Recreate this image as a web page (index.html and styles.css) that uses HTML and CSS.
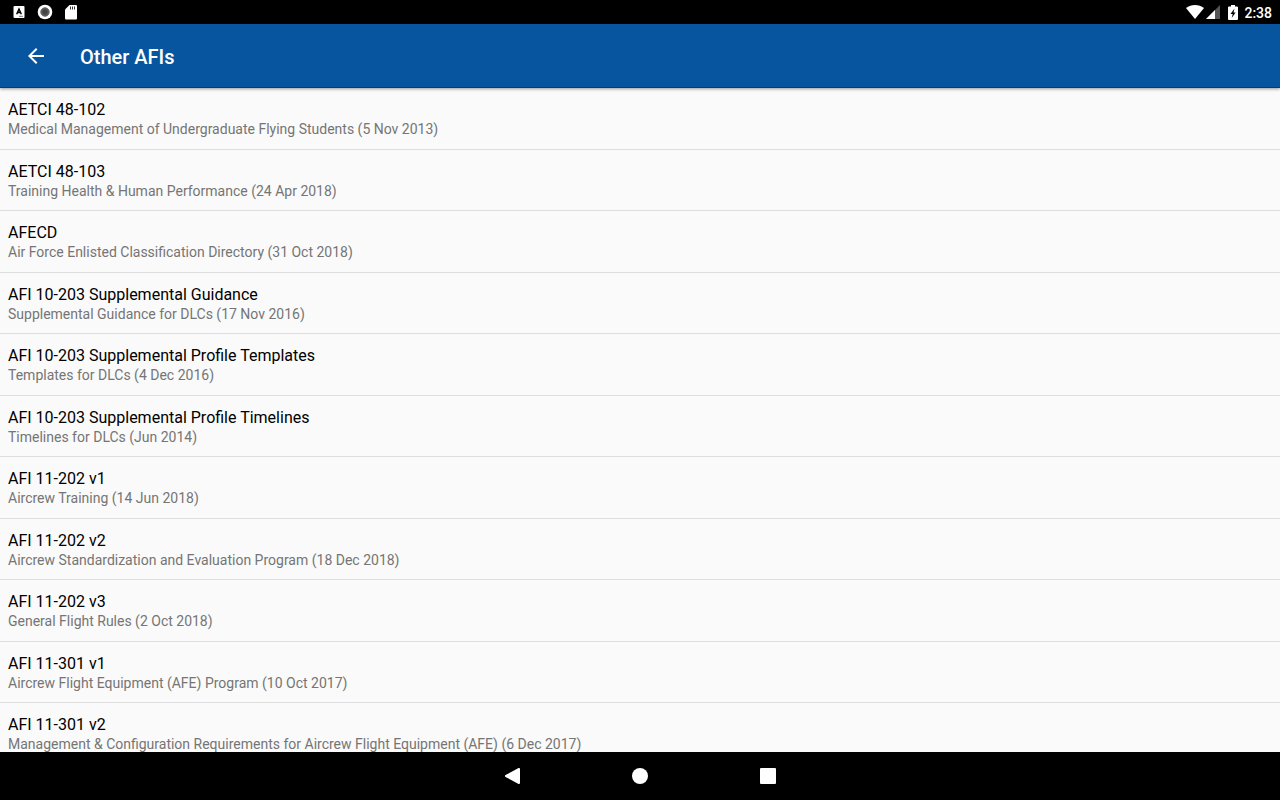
FILE: index.html
```html
<!DOCTYPE html>
<html lang="en">
<head>
  <meta charset="UTF-8" />
  <meta name="viewport" content="width=device-width, initial-scale=1.0"/>
  <title>Other AFIs</title>
  <link rel="stylesheet" href="styles.css">
</head>
<body>
  <div class="status-bar">
    <div class="status-icons">
      <svg width="12" height="12" viewBox="0 0 12 12">
        <rect x="0.5" width="11" height="12" rx="1" fill="#fff"/>
        <path d="M3.7 8.2L6 3l2.300 5.200M4.600 6.600h2.800" fill="none" stroke="#000" stroke-width="1.500"/>
        <path d="M6 10.300h4" stroke="#555" stroke-width="0.800"/>
      </svg>
      <svg width="16" height="16" viewBox="0 0 16 16">
        <circle cx="8" cy="8" r="7.300" fill="#fff"/>
        <circle cx="8" cy="8" r="4.200" fill="#555" stroke="#666" stroke-width="1"/>
        <circle cx="8" cy="8" r="2.400" fill="#444"/>
      </svg>
      <svg width="12" height="16" viewBox="0 0 12 16">
        <path d="M4.500 1H11a1 1 0 0 1 1 1v12.500a1 1 0 0 1-1 1H1a1 1 0 0 1-1-1V5.500z" fill="#fff"/>
        <path d="M5.500 2.500v3M7.500 2.500v3M9.500 2.500v3" stroke="#333" stroke-width="1"/>
      </svg>
    </div>
    <div class="status-system">
      <svg width="18" height="14" viewBox="0 0 18 14">
        <path d="M9 14L0 3C5-1 13-1 18 3z" fill="#fff"/>
      </svg>
      <svg width="14" height="14" viewBox="0 0 14 14">
        <path d="M14 0v14H0z" fill="#555"/>
        <path d="M9 5v9H0z" fill="#fff"/>
      </svg>
      <svg class="battery" width="10" height="15" viewBox="0 0 10 15">
        <path d="M3 0h4v1.500h2a1 1 0 0 1 1 1V14a1 1 0 0 1-1 1H1a1 1 0 0 1-1-1V2.500a1 1 0 0 1 1-1h2z" fill="#fff"/>
        <path d="M6.500 3.500L2.500 9h2.200l-1 4L7.600 7.500H5.500z" fill="#000"/>
      </svg>
      <span class="clock">2:38</span>
    </div>
  </div>

  <header class="app-bar">
    <button class="back" aria-label="Back">
      <svg width="24" height="24" viewBox="0 0 24 24">
        <path d="M20 11H7.830l5.590-5.590L12 4l-8 8 8 8 1.410-1.410L7.830 13H20z" fill="#fff"/>
      </svg>
    </button>
    <h1>Other AFIs</h1>
  </header>

  <main class="content">
    <ul class="list">
      <li><a href="#"><span class="name">AETCI 48-102</span><span class="detail">Medical Management of Undergraduate Flying Students (5 Nov 2013)</span></a></li>
      <li><a href="#"><span class="name">AETCI 48-103</span><span class="detail">Training Health &amp; Human Performance (24 Apr 2018)</span></a></li>
      <li><a href="#"><span class="name">AFECD</span><span class="detail">Air Force Enlisted Classification Directory (31 Oct 2018)</span></a></li>
      <li><a href="#"><span class="name">AFI 10-203 Supplemental Guidance</span><span class="detail">Supplemental Guidance for DLCs (17 Nov 2016)</span></a></li>
      <li><a href="#"><span class="name">AFI 10-203 Supplemental Profile Templates</span><span class="detail">Templates for DLCs (4 Dec 2016)</span></a></li>
      <li><a href="#"><span class="name">AFI 10-203 Supplemental Profile Timelines</span><span class="detail">Timelines for DLCs (Jun 2014)</span></a></li>
      <li><a href="#"><span class="name">AFI 11-202 v1</span><span class="detail">Aircrew Training (14 Jun 2018)</span></a></li>
      <li><a href="#"><span class="name">AFI 11-202 v2</span><span class="detail">Aircrew Standardization and Evaluation Program (18 Dec 2018)</span></a></li>
      <li><a href="#"><span class="name">AFI 11-202 v3</span><span class="detail">General Flight Rules (2 Oct 2018)</span></a></li>
      <li><a href="#"><span class="name">AFI 11-301 v1</span><span class="detail">Aircrew Flight Equipment (AFE) Program (10 Oct 2017)</span></a></li>
      <li><a href="#"><span class="name">AFI 11-301 v2</span><span class="detail">Management &amp; Configuration Requirements for Aircrew Flight Equipment (AFE) (6 Dec 2017)</span></a></li>
    </ul>
  </main>

  <nav class="nav-bar">
    <button aria-label="Back">
      <svg width="16" height="16" viewBox="0 0 16 16">
        <path d="M15 1v14L2 8z" fill="#fff" stroke="#fff" stroke-width="2" stroke-linejoin="round"/>
      </svg>
    </button>
    <button aria-label="Home">
      <svg width="16" height="16" viewBox="0 0 16 16">
        <circle cx="8" cy="8" r="8" fill="#fff"/>
      </svg>
    </button>
    <button aria-label="Recent apps">
      <svg width="16" height="16" viewBox="0 0 16 16">
        <rect width="16" height="16" rx="1" fill="#fff"/>
      </svg>
    </button>
  </nav>
</body>
</html>
```

FILE: styles.css
```css
* {
  box-sizing: border-box;
}

body {
  margin: 0;
  height: 100vh;
  display: flex;
  flex-direction: column;
  background-color: #fafafa;
  font-family: Roboto, sans-serif;
}

svg {
  display: block;
}

button {
  display: flex;
  align-items: center;
  justify-content: center;
  padding: 0;
  border: none;
  background: none;
  cursor: pointer;
}

/* status bar */
.status-bar {
  flex: none;
  display: flex;
  align-items: center;
  justify-content: space-between;
  height: 24px;
  padding: 0 8px 0 13px;
  background-color: #000;
  color: #fff;
}

.status-icons {
  display: flex;
  align-items: center;
  gap: 12px;
}

.status-system {
  display: flex;
  align-items: center;
  gap: 2px;
}

.battery {
  margin: 0 4px 0 6px;
}

.clock {
  font-size: 14px;
  font-weight: 500;
  line-height: 24px;
  padding-top: 1px;
}

/* app bar */
.app-bar {
  flex: none;
  display: flex;
  align-items: center;
  gap: 20px;
  height: 64px;
  padding: 0 12px;
  background-color: #08559f;
  border-bottom: 1px solid #003c8a;
  box-shadow: 0 1px 3px rgba(0,0,0,0.4);
  z-index: 1;
}

.back {
  width: 48px;
  height: 48px;
}

.app-bar h1 {
  margin: 0;
  padding-top: 2px;
  color: #fff;
  font-size: 20px;
  font-weight: 500;
  line-height: 24px;
}

/* list */
.content {
  flex: 1;
  min-height: 0;
  overflow: hidden;
}

.list {
  margin: 0;
  padding: 0;
  list-style: none;
}

.list li {
  border-bottom: 1px solid #dedede;
}

.list a {
  display: block;
  padding: 13px 8px 10px;
  text-decoration: none;
}

.list li:nth-child(even) a {
  padding-bottom: 9px;
}

.name,
.detail {
  display: block;
}

.name {
  color: #000;
  font-size: 16px;
  line-height: 18px;
}

.detail {
  color: #757575;
  font-size: 14px;
  line-height: 20px;
}

/* navigation bar */
.nav-bar {
  flex: none;
  display: flex;
  justify-content: center;
  gap: 48px;
  height: 48px;
  background-color: #000;
}

.nav-bar button {
  width: 80px;
  height: 48px;
}
```
